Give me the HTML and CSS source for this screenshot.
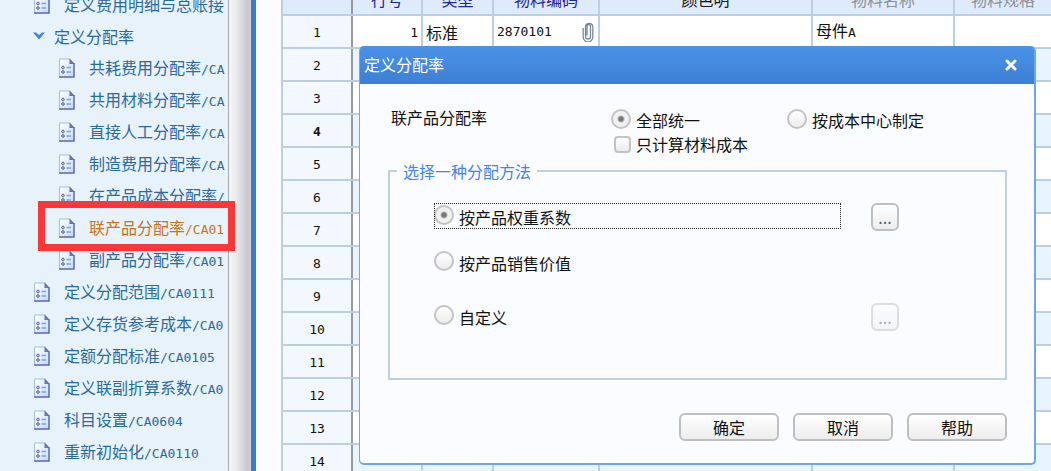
FILE: index.html
```html
<!DOCTYPE html>
<html lang="zh-CN">
<head>
    <meta charset="UTF-8">
    <meta name="viewport" content="width=device-width, initial-scale=1.0">
    <title>定义分配率</title>
    <link rel="stylesheet" href="styles.css">
</head>
<body>
    <svg class="sprite" aria-hidden="true">
        <defs>
            <linearGradient id="page-fill" x1="0" y1="0" x2="1" y2="1">
                <stop offset="0" stop-color="#ffffff"/>
                <stop offset="1" stop-color="#c3dafa"/>
            </linearGradient>
        </defs>
        <symbol id="icon-doc" viewBox="0 0 18 20">
            <path d="M1.500 1H12L16 5.500V19H1.500Z" fill="url(#page-fill)" stroke="#9fbbe6"/>
            <path d="M16 5V19H1" fill="none" stroke="#6a70ab" stroke-width="1.500"/>
            <path d="M11.500 0.500L16.700 6H11.500Z" fill="#6973b4"/>
            <circle cx="5" cy="9.500" r="1.300" fill="#ddd" stroke="#5c606a"/>
            <circle cx="5" cy="14" r="1.300" fill="#ddd" stroke="#5c606a"/>
            <path d="M8.500 9.500H13M8.500 14H13" stroke="#7ba6e0" stroke-width="1.300"/>
        </symbol>
    </svg>

    <div class="layout">
        <nav class="sidebar">
            <ul class="tree">
                <li class="node"><svg class="icon"><use href="#icon-doc"/></svg><a href="#">定义费用明细与总账接</a></li>
                <li class="node folder"><svg class="caret" viewBox="0 0 12 8"><path d="M0 0.500L3 0.500L6 3L9 0.500L12 0.500L6 7.500Z" fill="#3d86dc"/></svg><a href="#">定义分配率</a></li>
                <li class="node child"><svg class="icon"><use href="#icon-doc"/></svg><a href="#">共耗费用分配率<span class="code">/CA</span></a></li>
                <li class="node child"><svg class="icon"><use href="#icon-doc"/></svg><a href="#">共用材料分配率<span class="code">/CA</span></a></li>
                <li class="node child"><svg class="icon"><use href="#icon-doc"/></svg><a href="#">直接人工分配率<span class="code">/CA</span></a></li>
                <li class="node child"><svg class="icon"><use href="#icon-doc"/></svg><a href="#">制造费用分配率<span class="code">/CA</span></a></li>
                <li class="node child"><svg class="icon"><use href="#icon-doc"/></svg><a href="#">在产品成本分配率<span class="code">/</span></a></li>
                <li class="node child active"><svg class="icon"><use href="#icon-doc"/></svg><a href="#">联产品分配率<span class="code">/CA01</span></a></li>
                <li class="node child"><svg class="icon"><use href="#icon-doc"/></svg><a href="#">副产品分配率<span class="code">/CA01</span></a></li>
                <li class="node"><svg class="icon"><use href="#icon-doc"/></svg><a href="#">定义分配范围<span class="code">/CA0111</span></a></li>
                <li class="node"><svg class="icon"><use href="#icon-doc"/></svg><a href="#">定义存货参考成本<span class="code">/CA0</span></a></li>
                <li class="node"><svg class="icon"><use href="#icon-doc"/></svg><a href="#">定额分配标准<span class="code">/CA0105</span></a></li>
                <li class="node"><svg class="icon"><use href="#icon-doc"/></svg><a href="#">定义联副折算系数<span class="code">/CA0</span></a></li>
                <li class="node"><svg class="icon"><use href="#icon-doc"/></svg><a href="#">科目设置<span class="code">/CA0604</span></a></li>
                <li class="node"><svg class="icon"><use href="#icon-doc"/></svg><a href="#">重新初始化<span class="code">/CA0110</span></a></li>
            </ul>
        </nav>
        <div class="splitter"></div>

        <main class="main">
            <table class="grid">
                <colgroup>
                    <col class="col-index">
                    <col class="col-line">
                    <col class="col-type">
                    <col class="col-code">
                    <col class="col-color">
                    <col class="col-name">
                    <col>
                </colgroup>
                <thead>
                    <tr><th></th><th>行号</th><th>类型</th><th>物料编码</th><th class="plain">颜色明</th><th class="muted">物料名称</th><th class="muted">物料规格</th></tr>
                </thead>
                <tbody>
                    <tr>
                        <th><span class="code">1</span></th>
                        <td class="right"><span class="code">1</span></td>
                        <td>标准</td>
                        <td>
                            <div class="cell">
                                <span class="code">2870101</span>
                                <svg class="clip" viewBox="0 0 12 20"><path d="M3.500 6V14.500A2.500 2.500 0 0 0 8.500 14.500V4A1.800 1.800 0 0 0 5 4V13.500M3.500 14V4.500A3.700 3.700 0 0 1 10.800 4.500V15A4.700 4.700 0 0 1 1.200 15V6" fill="none" stroke="#75879c" stroke-width="1.300"/></svg>
                            </div>
                        </td>
                        <td></td>
                        <td>母件<span class="code">A</span></td>
                        <td></td>
                    </tr>
                    <tr><th><span class="code">2</span></th><td></td><td></td><td></td><td></td><td></td><td></td></tr>
                    <tr><th><span class="code">3</span></th><td></td><td></td><td></td><td></td><td></td><td></td></tr>
                    <tr class="current"><th><span class="code">4</span></th><td></td><td></td><td></td><td></td><td></td><td></td></tr>
                    <tr><th><span class="code">5</span></th><td></td><td></td><td></td><td></td><td></td><td></td></tr>
                    <tr><th><span class="code">6</span></th><td></td><td></td><td></td><td></td><td></td><td></td></tr>
                    <tr><th><span class="code">7</span></th><td></td><td></td><td></td><td></td><td></td><td></td></tr>
                    <tr><th><span class="code">8</span></th><td></td><td></td><td></td><td></td><td></td><td></td></tr>
                    <tr><th><span class="code">9</span></th><td></td><td></td><td></td><td></td><td></td><td></td></tr>
                    <tr><th><span class="code">10</span></th><td></td><td></td><td></td><td></td><td></td><td></td></tr>
                    <tr><th><span class="code">11</span></th><td></td><td></td><td></td><td></td><td></td><td></td></tr>
                    <tr><th><span class="code">12</span></th><td></td><td></td><td></td><td></td><td></td><td></td></tr>
                    <tr><th><span class="code">13</span></th><td></td><td></td><td></td><td></td><td></td><td></td></tr>
                    <tr><th><span class="code">14</span></th><td></td><td></td><td></td><td></td><td></td><td></td></tr>
                </tbody>
            </table>
        </main>
    </div>

    <form class="dialog" role="dialog" aria-labelledby="dialog-title">
        <header class="dialog-header">
            <h1 class="dialog-title" id="dialog-title">定义分配率</h1>
            <button type="button" class="close" aria-label="关闭">
                <svg viewBox="0 0 12 12"><path d="M2 2L10 10M10 2L2 10" stroke="#fff" stroke-width="3" stroke-linecap="round"/></svg>
            </button>
        </header>
        <div class="dialog-body">
            <div class="scope" role="radiogroup" aria-labelledby="scope-label">
                <span class="scope-label" id="scope-label">联产品分配率</span>
                <label class="choice"><input type="radio" name="scope" checked><span>全部统一</span></label>
                <label class="choice"><input type="radio" name="scope"><span>按成本中心制定</span></label>
                <label class="choice choice-check"><input type="checkbox"><span>只计算材料成本</span></label>
            </div>

            <fieldset class="methods">
                <legend>选择一种分配方法</legend>
                <div class="method-list">
                    <label class="choice focused"><input type="radio" name="method" checked><span>按产品权重系数</span></label>
                    <button type="button" class="btn btn-more">...</button>
                    <label class="choice"><input type="radio" name="method"><span>按产品销售价值</span></label>
                    <span></span>
                    <label class="choice"><input type="radio" name="method"><span>自定义</span></label>
                    <button type="button" class="btn btn-more" disabled>...</button>
                </div>
            </fieldset>

            <div class="actions">
                <button type="button" class="btn">确定</button>
                <button type="button" class="btn">取消</button>
                <button type="button" class="btn">帮助</button>
            </div>
        </div>
    </form>

    <div class="highlight"></div>
</body>
</html>
```
FILE: styles.css
```css
* {
    margin: 0;
    padding: 0;
    box-sizing: border-box;
}
body {
    position: relative;
    height: 100vh;
    overflow: hidden;
    font-family: "Noto Sans CJK SC", sans-serif;
    font-size: 16px;
    line-height: 24px;
    color: #111;
    background-color: #fafcff;
}
button, input {
    font: inherit;
    color: inherit;
}
.sprite {
    position: absolute;
    width: 0;
    height: 0;
}
.code {
    font-family: "DejaVu Sans Mono", monospace;
    font-size: 13px;
}
.layout {
    display: flex;
    height: 100%;
    overflow: hidden;
}

/* 左侧导航树 */
.sidebar {
    flex: 0 0 228px;
    overflow: hidden;
    background-color: #e7f2fb;
}
.tree {
    margin-top: -12px;
    list-style: none;
}
.node {
    display: flex;
    align-items: center;
    gap: 13px;
    height: 32px;
    padding-left: 33px;
    white-space: nowrap;
}
.node a {
    color: #2b6a9d;
    text-decoration: none;
}
.folder {
    gap: 9px;
}
.child {
    padding-left: 58px;
}
.active a {
    color: #c8731a;
}
.icon {
    flex: none;
    width: 18px;
    height: 20px;
}
.caret {
    flex: none;
    width: 12px;
    height: 8px;
}
.splitter {
    flex: 0 0 28px;
    border-left: 1px solid #a9a9ac;
    border-right: 5px solid #3f7cc8;
    background: linear-gradient(to right, #f6f6f6, #ececee 30%, #c6c7d0 85%, #d2d3cf);
}

/* 物料表格 */
.main {
    flex: 1;
    min-width: 0;
    padding-left: 25px;
    overflow: hidden;
}
.grid {
    width: 100%;
    margin-top: -19px;
    table-layout: fixed;
    border-collapse: collapse;
}
.col-index {
    width: 70px;
}
.col-line {
    width: 70px;
}
.col-type {
    width: 71px;
}
.col-code {
    width: 106px;
}
.col-color {
    width: 213px;
}
.col-name {
    width: 142px;
}
.grid th, .grid td {
    height: 33px;
    padding: 0 3px;
    border: 2px solid #bccde6;
    line-height: 24px;
    font-weight: normal;
    text-align: left;
    white-space: nowrap;
}
.grid th {
    text-align: center;
    background-color: #f3f8ff;
}
.grid thead th {
    color: #22229a;
    background-color: #deebfc;
}
.grid thead .plain {
    color: #111;
}
.grid thead .muted {
    color: #8a8f98;
}
.grid th:first-child {
    border-right-color: #96999e;
}
.grid th:last-child, .grid td:last-child {
    border-right: none;
}
.grid tbody tr {
    background-color: #fff;
}
.grid tbody tr:nth-child(even) {
    background-color: #e8f4ff;
}
.grid .right {
    text-align: right;
}
.grid .current th {
    font-weight: bold;
}
.cell {
    display: flex;
    align-items: center;
    justify-content: space-between;
}
.clip {
    width: 12px;
    height: 20px;
    margin-right: 1px;
}

/* 对话框 */
.dialog {
    position: absolute;
    top: 46px;
    left: 359px;
    right: 15px;
    border: 1px solid #6fa6ea;
    border-width: 0 2px 2px 1px;
    border-radius: 5px;
    background-color: #fbfcff;
}
.dialog-header {
    display: flex;
    align-items: center;
    justify-content: space-between;
    height: 38px;
    padding: 0 17px 0 4px;
    border-radius: 4px 4px 0 0;
    background: linear-gradient(#4b93e8, #3c7fd3);
}
.dialog-title {
    font-size: 16px;
    line-height: 24px;
    padding-bottom: 3px;
    font-weight: normal;
    color: #fff;
}
.close {
    width: 12px;
    height: 12px;
    border: none;
    background: none;
    cursor: pointer;
}
.close svg {
    display: block;
}
.dialog-body {
    padding: 21px 27px 22px 28px;
}
.scope {
    display: grid;
    grid-template-columns: 220px 176px 1fr;
    grid-template-rows: 27px 24px;
    padding-left: 3px;
}
.choice {
    display: flex;
    align-items: center;
    gap: 5px;
}
.choice span {
    padding-top: 3px;
}
.choice-check {
    grid-column: 2 / 4;
}
.choice-check span {
    padding-top: 0;
}
input[type="radio"], input[type="checkbox"] {
    flex: none;
    appearance: none;
    border: 2px solid #c3c3c5;
    background: linear-gradient(#fff, #ececec);
}
input[type="radio"] {
    width: 20px;
    height: 20px;
    border-radius: 50%;
}
input[type="radio"]:checked {
    background: radial-gradient(circle, #777 2px, #f0f0f0 4px);
}
input[type="checkbox"] {
    width: 17px;
    height: 17px;
    margin-left: 3px;
    border-radius: 4px;
}
.methods {
    margin-top: 3px;
    border: 2px solid #c0d0e4;
}
.methods legend {
    margin-left: 7px;
    padding: 0 6px;
    color: #4284f5;
}
.method-list {
    display: grid;
    grid-template-columns: 1fr 28px;
    grid-template-rows: 46px 54px 28px;
    column-gap: 30px;
    align-items: start;
    padding: 20px 106px 47px 44px;
}
.method-list .choice {
    height: 26px;
    padding-bottom: 2px;
}
.focused {
    outline: 1px dotted #222;
    outline-offset: -1px;
}
.btn {
    width: 100px;
    height: 28px;
    border: 2px solid #bfbfc1;
    border-radius: 6px;
    line-height: 24px;
    background: linear-gradient(#fff, #ededed);
    cursor: pointer;
}
.btn-more {
    width: 28px;
    line-height: 20px;
    color: #4b5f80;
}
.btn-more:disabled {
    opacity: 0.5;
}
.actions {
    display: flex;
    justify-content: flex-end;
    gap: 14px;
    margin-top: 33px;
}

/* 红色标注框 */
.highlight {
    position: absolute;
    top: 201px;
    left: 38px;
    width: 197px;
    height: 50px;
    border: 7px solid #fc3737;
    pointer-events: none;
}
```
